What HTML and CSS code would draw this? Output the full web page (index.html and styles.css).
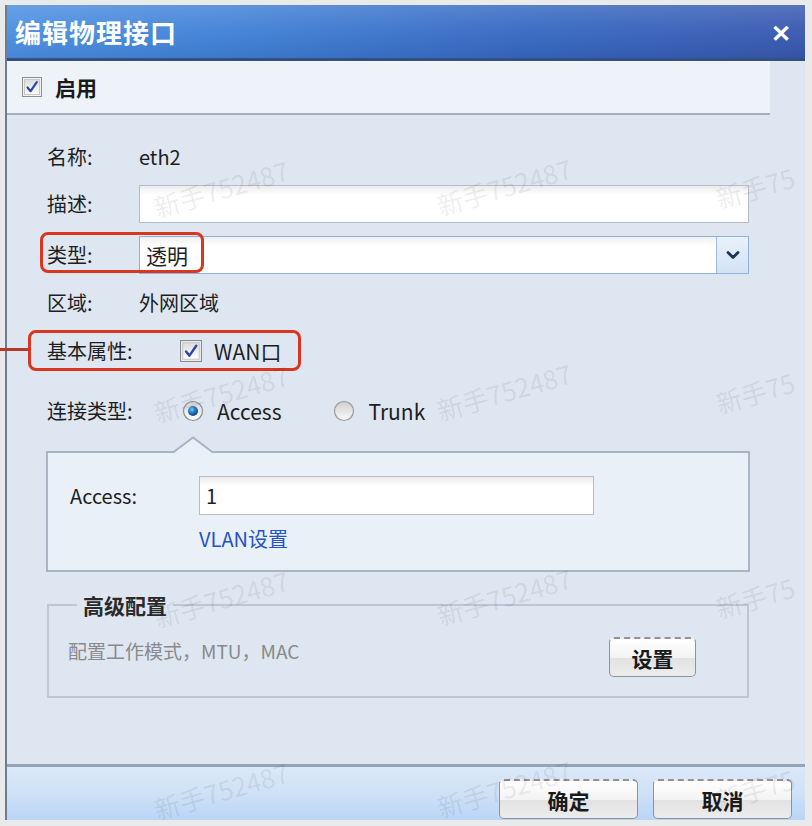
FILE: index.html
```html
<!DOCTYPE html>
<html lang="zh-CN">
<head>
<meta charset="utf-8">
<title>编辑物理接口</title>
<link rel="stylesheet" href="styles.css">
</head>
<body>
<div class="screen">
  <div class="dialog">
    <div class="titlebar">
      <span class="title">编辑物理接口</span>
      <span class="close">✕</span>
    </div>
    <div class="topbar">
      <div class="enable">
        <span class="checkbox">
          <svg width="20" height="20" viewBox="0 0 20 20"><defs><linearGradient id="cbg" x1="0" y1="0" x2="0" y2="1"><stop offset="0" stop-color="#dcdcdc"/><stop offset="1" stop-color="#ffffff"/></linearGradient></defs><rect x="0.5" y="0.5" width="19" height="19" fill="#f4f4f4" stroke="#8c8c8c"/><rect x="2.5" y="2.5" width="15" height="15" fill="url(#cbg)" stroke="#c8c8c8"/><path d="M5.5 10.5 L8.6 14.2 L14.8 5.2" fill="none" stroke="#2c46a6" stroke-width="2.2" stroke-linecap="round" stroke-linejoin="round"/></svg>
        </span>
        <span class="enable-label">启用</span>
      </div>
    </div>
    <div class="body">
      <div class="form">
        <div class="label">名称:</div>
        <div class="value">eth2</div>

        <div class="label">描述:</div>
        <div class="value"><div class="input wide"></div></div>

        <div class="label">类型:</div>
        <div class="value">
          <div class="select">
            <span class="select-text">透明</span>
            <span class="select-btn">
              <svg width="14" height="10" viewBox="0 0 14 10"><path d="M2 2.5 L7 7.5 L12 2.5" fill="none" stroke="#1e3359" stroke-width="2.8" stroke-linecap="round" stroke-linejoin="round"/></svg>
            </span>
          </div>
        </div>

        <div class="label">区域:</div>
        <div class="value">外网区域</div>

        <div class="label">基本属性:</div>
        <div class="value">
          <span class="check-inline">
            <svg width="22" height="22" viewBox="0 0 20 20"><defs><linearGradient id="cbg2" x1="0" y1="0" x2="0" y2="1"><stop offset="0" stop-color="#dcdcdc"/><stop offset="1" stop-color="#ffffff"/></linearGradient></defs><rect x="0.5" y="0.5" width="19" height="19" fill="#f4f4f4" stroke="#8c8c8c"/><rect x="2.5" y="2.5" width="15" height="15" fill="url(#cbg2)" stroke="#c8c8c8"/><path d="M5.5 10.5 L8.6 14.2 L14.8 5.2" fill="none" stroke="#2c46a6" stroke-width="2.2" stroke-linecap="round" stroke-linejoin="round"/></svg>
            <span class="wan">WAN口</span>
          </span>
        </div>

        <div class="label">连接类型:</div>
        <div class="value radios">
          <span class="radio-item">
            <svg width="22" height="22" viewBox="0 0 22 22"><defs><linearGradient id="rg" x1="0" y1="0" x2="0" y2="1"><stop offset="0" stop-color="#d6d6d6"/><stop offset="1" stop-color="#ffffff"/></linearGradient><radialGradient id="rd" cx="0.4" cy="0.35" r="0.7"><stop offset="0" stop-color="#7cc4f2"/><stop offset="0.5" stop-color="#1d7cc2"/><stop offset="1" stop-color="#0b3f78"/></radialGradient></defs><circle cx="11" cy="11" r="9.5" fill="url(#rg)" stroke="#8e8e8e" stroke-width="1.2"/><circle cx="11" cy="11" r="5" fill="url(#rd)"/></svg>
            <span>Access</span>
          </span>
          <span class="radio-item trunk">
            <svg width="22" height="22" viewBox="0 0 22 22"><defs><linearGradient id="rg2" x1="0" y1="0" x2="0" y2="1"><stop offset="0" stop-color="#cfcfcf"/><stop offset="1" stop-color="#fbfbfb"/></linearGradient></defs><circle cx="11" cy="11" r="9.5" fill="url(#rg2)" stroke="#9a9a9a" stroke-width="1.2"/></svg>
            <span>Trunk</span>
          </span>
        </div>
      </div>

      <div class="panel">
        <svg class="panel-arrow" width="44" height="18" viewBox="0 0 44 18"><path d="M1 17.5 L21 1.5 L41 17.5 Z" fill="#e9f0f8"/><path d="M1 16.5 L21 1.5 L41 16.5" fill="none" stroke="#a9b5c4" stroke-width="2"/></svg>
        <div class="panel-row">
          <span class="panel-label">Access:</span>
          <div class="input access">1</div>
        </div>
        <a class="vlan">VLAN设置</a>
      </div>

      <fieldset class="adv">
        <legend>高级配置</legend>
        <div class="adv-row">
          <span class="adv-text">配置工作模式，MTU，MAC</span>
          <span class="btn small">设置</span>
        </div>
      </fieldset>
    </div>
    <div class="footer">
      <span class="btn">确定</span>
      <span class="btn">取消</span>
    </div>
  </div>

  <div class="hl hl-type"></div>
  <div class="hl hl-wan"></div>
  <div class="hl-line"></div>

  <div class="marks">
    <span class="mark m11">新手752487</span>
    <span class="mark m12">新手752487</span>
    <span class="mark edge m13">新手75</span>
    <span class="mark m21">新手752487</span>
    <span class="mark m22">新手752487</span>
    <span class="mark edge m23">新手75</span>
    <span class="mark m31">新手752487</span>
    <span class="mark m32">新手752487</span>
    <span class="mark edge m33">新手75</span>
    <span class="mark m41">新手752487</span>
    <span class="mark m42">新手752487</span>
    <span class="mark edge m43">新手75</span>
  </div>
</div>
</body>
</html>
```

FILE: styles.css
```css
* { box-sizing: border-box; }
html, body { margin: 0; padding: 0; }
body {
  background: #e9eaec;
  font-family: "Noto Sans CJK SC", "Noto Sans", sans-serif;
  color: #1e1e1e;
}
.screen {
  position: relative;
  width: 812px;
  height: 826px;
  padding: 5px 0 0 5px;
  background: #e9eaec;
  overflow: hidden;
}
.dialog {
  width: 800px;
  height: 815px;
  display: flex;
  flex-direction: column;
  border-left: 2px solid #6f7c8e;
  background: #dde6f1;
}
.titlebar {
  height: 56px;
  display: flex;
  align-items: center;
  justify-content: space-between;
  padding: 0 14px 0 8px;
  background:
    linear-gradient(180deg, rgba(255,255,255,0.16) 0%, rgba(255,255,255,0.05) 45%, rgba(0,0,0,0.06) 100%),
    linear-gradient(90deg, #4b8fe2 0%, #3f7fd6 30%, #3568c2 65%, #3858b0 100%);
  border-bottom: 3px solid #33507f;
}
.title {
  color: #fff;
  font-size: 26px;
  font-weight: 700;
  letter-spacing: 1px;
}
.close {
  color: #fff;
  font-size: 24px;
  font-weight: 700;
}
.topbar {
  height: 54px;
  margin-right: 35px;
  background: #eef3fa;
  border-bottom: 2px solid #a6b0bd;
  display: flex;
  align-items: center;
  padding-left: 15px;
}
.enable { display: flex; align-items: center; gap: 13px; }
.checkbox { display: flex; }
.enable-label { font-size: 21px; font-weight: 700; color: #1a1a1a; }
.body {
  flex: 1;
  padding: 23px 56px 0 40px;
  background: #dde6f1;
}
.form {
  display: grid;
  grid-template-columns: 92px 1fr;
  grid-template-rows: 47px 51px 48px 48px 60px 38px;
}
.label, .value {
  height: 38px;
  line-height: 38px;
  font-size: 20px;
  display: flex;
  align-items: center;
  white-space: nowrap;
}
.input {
  height: 38px;
  background: linear-gradient(180deg, #ececec 0%, #ffffff 25%, #ffffff 100%);
  border: 1px solid #b9bdc3;
}
.input.wide { width: 100%; }
.select {
  width: 100%;
  height: 38px;
  display: flex;
  border: 1px solid #8fb2dc;
  background: linear-gradient(180deg, #efefef 0%, #ffffff 25%, #ffffff 100%);
}
.select-text { flex: 1; padding-left: 6px; font-size: 21px; line-height: 36px; }
.select-btn {
  width: 32px;
  display: flex;
  align-items: center;
  justify-content: center;
  background: linear-gradient(180deg, #e9f1fb, #d2e2f5);
  border-left: 1px solid #9fbde2;
}
.check-inline { display: flex; align-items: center; gap: 12px; padding-left: 41px; }
.wan { font-size: 21px; }
.radios { gap: 52px; padding-left: 43px; }
.radio-item { display: flex; align-items: center; gap: 13px; font-size: 21px; }
.panel {
  position: relative;
  margin: 21px -1px 0 -1px;
  height: 121px;
  border: 2px solid #a9b5c4;
  background: #e9f0f8;
  padding: 23px 0 0 22px;
}
.panel-arrow {
  position: absolute;
  left: 124px;
  top: -17px;
}
.panel-row { display: flex; align-items: center; }
.panel-label { width: 129px; font-size: 20px; }
.input.access {
  width: 395px;
  height: 39px;
  line-height: 37px;
  padding-left: 6px;
  font-size: 20px;
}
.vlan {
  display: block;
  margin: 12px 0 0 129px;
  font-size: 20px;
  line-height: 24px;
  color: #2452c8;
}
.adv {
  margin: 21px 0 0 0;
  padding: 20px 51px 19px 19px;
  border: 2px solid #bcc7d4;
  min-width: 0;
}
.adv legend {
  margin-left: 9px;
  padding: 0 6px;
  font-size: 21px;
  line-height: 24px;
  font-weight: 700;
  color: #2a2a2a;
}
.adv-row { display: flex; justify-content: space-between; align-items: flex-start; }
.adv-text { margin-top: 2px; font-size: 19px; line-height: 24px; color: #8a8a8a; }
.btn {
  display: inline-flex;
  align-items: center;
  justify-content: center;
  width: 139px;
  height: 40px;
  border: 1px solid #8e9299;
  border-top: 2px dashed #8e9299;
  border-radius: 5px;
  background: linear-gradient(180deg, #ffffff 0%, #f3f3f3 50%, #e2e2e2 51%, #ececec 100%);
  font-size: 21px;
  font-weight: 700;
  color: #1a1a1a;
}
.btn.small { width: 87px; }
.footer {
  height: 56px;
  border-top: 3px solid #95a5b9;
  background: linear-gradient(180deg, #dbe8f7 0%, #cfe1f6 50%, #b9d5f6 100%);
  display: flex;
  justify-content: flex-end;
  align-items: flex-start;
  gap: 15px;
  padding: 12px 13px 0 0;
}
.hl {
  position: absolute;
  border: 3px solid #d8361f;
  border-radius: 8px;
}
.hl-type { left: 40px; top: 232px; width: 164px; height: 41px; }
.hl-wan { left: 28px; top: 330px; width: 273px; height: 41px; }
.hl-line {
  position: absolute;
  left: 0;
  top: 348px;
  width: 29px;
  height: 3px;
  background: #b8382a;
}
.marks { position: absolute; inset: 0; pointer-events: none; }
.mark {
  position: absolute;
  font-size: 26px;
  color: rgba(0, 0, 0, 0.085);
  white-space: nowrap;
  transform: translate(-50%, -50%) rotate(-16deg);
}
.mark.edge { transform: translate(0, -50%) rotate(-16deg); transform-origin: left center; }
.m11 { left: 221px; top: 188px; }
.m12 { left: 504px; top: 186px; }
.m13 { left: 716px; top: 198px; }
.m21 { left: 221px; top: 393px; }
.m22 { left: 504px; top: 391px; }
.m23 { left: 716px; top: 403px; }
.m31 { left: 221px; top: 598px; }
.m32 { left: 504px; top: 596px; }
.m33 { left: 716px; top: 608px; }
.m41 { left: 221px; top: 790px; }
.m42 { left: 504px; top: 788px; }
.m43 { left: 716px; top: 800px; }
```
